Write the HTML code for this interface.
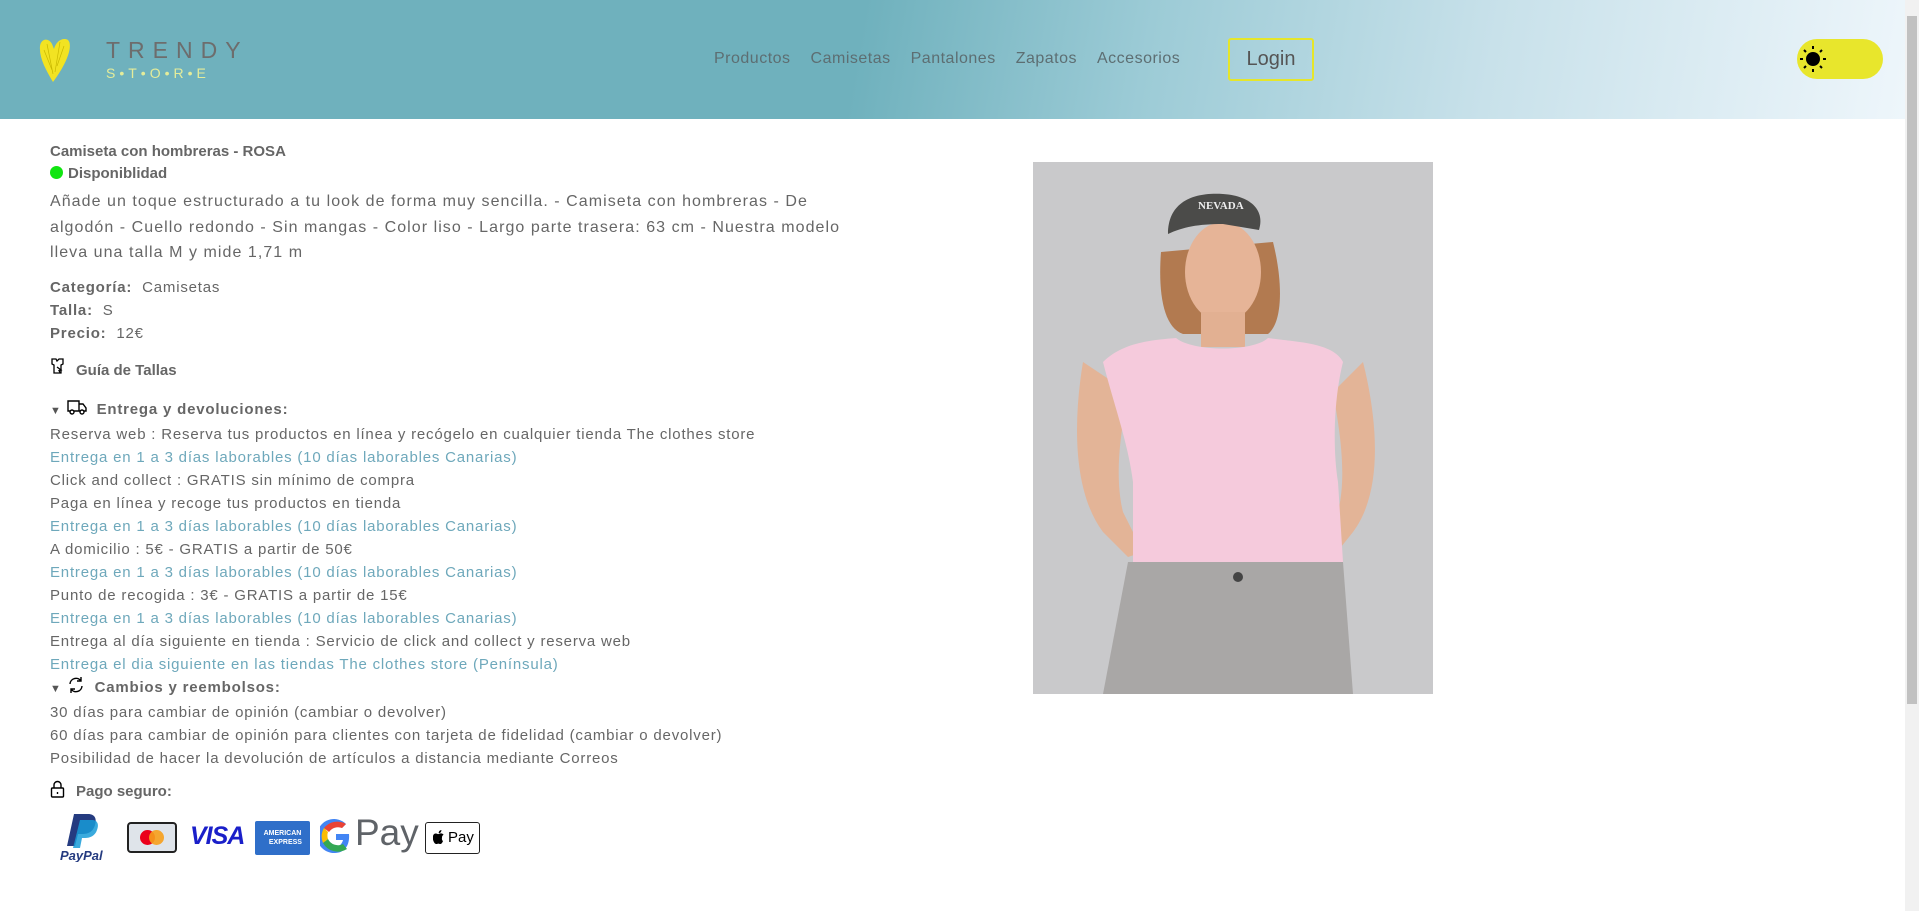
<!DOCTYPE html>
<html><head><meta charset="utf-8"><style>
*{margin:0;padding:0;box-sizing:border-box}
body{width:1919px;height:911px;overflow:hidden;background:#fff;font-family:"Liberation Sans",sans-serif;color:#666;position:relative}
.hdr{position:absolute;left:0;top:0;width:1905px;height:119px;background:linear-gradient(100deg,#6fb1bd 0%,#6fb1bd 45%,#9ccbd6 60%,#c8e1ea 78%,#eef6fb 100%)}
.sb{position:absolute;left:1905px;top:0;width:14px;height:911px;background:#f1f1f1}
.sb div{position:absolute;left:2px;top:16px;width:10px;height:688px;background:#c1c1c1}
.abs{position:absolute;white-space:nowrap}
.nav a{color:#5d6e72;font-size:16px;letter-spacing:.5px;margin-right:20px;text-decoration:none}
b{color:#666}
.lk{color:#6ea8bb}
.t{font-size:15px;letter-spacing:.8px}
</style></head><body>
<div class="hdr"></div>
<div class="sb"><div></div></div>
<svg class="abs" style="left:38px;top:36px" width="34" height="48" viewBox="0 0 34 48"><path d="M15 46 C8 34 1 22 2 10 C3 3 10 1 14 8 L16 13 C18 5 25 1 30 4 C35 9 30 26 15 46Z" fill="#f2e322"/><path d="M9 8 L15 38 M22 6 L17 36 M6 14 L14 34 M26 10 L19 30" stroke="#c9b800" stroke-width=".7" fill="none"/></svg>
<div class="abs" style="left:106px;top:37px;font-size:23px;letter-spacing:8px;color:#6d6d6d">TRENDY</div>
<div class="abs" style="left:106px;top:65px;font-size:14px;letter-spacing:4px;color:#e4ec9a">S•T•O•R•E</div>
<div class="abs nav" style="left:714px;top:50px">
<a>Productos</a><a>Camisetas</a><a>Pantalones</a><a>Zapatos</a><a>Accesorios</a></div>
<div class="abs" style="left:1228px;top:38px;width:86px;height:43px;border:2px solid #e6e62a;border-radius:3px;color:#555;font-size:20px;text-align:center;line-height:39px">Login</div>
<div class="abs" style="left:1797px;top:39px;width:86px;height:40px;border-radius:20px;background:#e8e62c"></div>
<svg class="abs" style="left:1799px;top:45px" width="28" height="28" viewBox="0 0 28 28"><circle cx="14" cy="14" r="7" fill="#000"/><g stroke="#000" stroke-width="2"><path d="M14 1v3M14 24v3M1 14h3M24 14h3M5 5l2 2M21 21l2 2M5 23l2-2M21 7l2-2"/></g></svg>

<div class="abs" style="left:50px;top:143px;font-size:15px;font-weight:bold;color:#666">Camiseta con hombreras - ROSA</div>
<div class="abs" style="left:50px;top:166px;width:13px;height:13px;border-radius:50%;background:#11e511"></div>
<div class="abs" style="left:68px;top:165px;font-size:15px;font-weight:bold;color:#666">Disponiblidad</div>
<div class="abs" style="left:50px;top:189px;font-size:16px;line-height:25.5px;letter-spacing:1.05px">Añade un toque estructurado a tu look de forma muy sencilla. - Camiseta con hombreras - De<br>algodón - Cuello redondo - Sin mangas - Color liso - Largo parte trasera: 63 cm - Nuestra modelo<br>lleva una talla M y mide 1,71 m</div>
<div class="abs t" style="left:50px;top:276px;line-height:23px"><b>Categoría:</b>&nbsp; Camisetas<br><b>Talla:</b>&nbsp; S<br><b>Precio:</b>&nbsp; 12€</div>
<svg class="abs" style="left:50px;top:357px" width="16" height="18" viewBox="0 0 16 18" fill="none" stroke="#000" stroke-width="1.3"><path d="M2 2h4l1 2 2-2h4v5l-2 1v8H4V8L2 7z"/><path d="M7 10l4 3-2 .5 1 2"/></svg>
<div class="abs" style="left:76px;top:362px;font-size:15px;font-weight:bold">Guía de Tallas</div>
<div class="abs t" style="left:50px;top:398px;line-height:23px">
<div><span style="font-size:11px;color:#555">▼</span> <svg width="20" height="16" viewBox="0 0 20 16" style="vertical-align:-1px" fill="none" stroke="#000" stroke-width="1.4"><path d="M1 2h11v10H1zM12 5h4l3 4v3h-7"/><circle cx="5" cy="13" r="2" fill="#fff"/><circle cx="15" cy="13" r="2" fill="#fff"/></svg>&nbsp; <b>Entrega y devoluciones:</b></div>
<div>Reserva web : Reserva tus productos en línea y recógelo en cualquier tienda The clothes store</div>
<div class="lk">Entrega en 1 a 3 días laborables (10 días laborables Canarias)</div>
<div>Click and collect : GRATIS sin mínimo de compra</div>
<div>Paga en línea y recoge tus productos en tienda</div>
<div class="lk">Entrega en 1 a 3 días laborables (10 días laborables Canarias)</div>
<div>A domicilio : 5€ - GRATIS a partir de 50€</div>
<div class="lk">Entrega en 1 a 3 días laborables (10 días laborables Canarias)</div>
<div>Punto de recogida : 3€ - GRATIS a partir de 15€</div>
<div class="lk">Entrega en 1 a 3 días laborables (10 días laborables Canarias)</div>
<div>Entrega al día siguiente en tienda : Servicio de click and collect y reserva web</div>
<div class="lk">Entrega el dia siguiente en las tiendas The clothes store (Península)</div>
<div><span style="font-size:11px;color:#555">▼</span> <svg width="18" height="18" viewBox="0 0 18 18" style="vertical-align:-2px" fill="none" stroke="#000" stroke-width="1.4"><path d="M3 8a6 6 0 0 1 11-3M15 10a6 6 0 0 1-11 3M14 1v4h-4M4 17v-4h4"/></svg>&nbsp; <b>Cambios y reembolsos:</b></div>
<div>30 días para cambiar de opinión (cambiar o devolver)</div>
<div>60 días para cambiar de opinión para clientes con tarjeta de fidelidad (cambiar o devolver)</div>
<div>Posibilidad de hacer la devolución de artículos a distancia mediante Correos</div>
</div>
<svg class="abs" style="left:50px;top:780px" width="15" height="18" viewBox="0 0 15 18" fill="none" stroke="#000" stroke-width="1.4"><path d="M4 8V5a3.5 3.5 0 0 1 7 0v3"/><rect x="1.5" y="8" width="12" height="9" rx="1"/><path d="M7.5 12v2"/></svg>
<div class="abs" style="left:76px;top:783px;font-size:15px;font-weight:bold">Pago seguro:</div>
<svg class="abs" style="left:58px;top:812px" width="60" height="50" viewBox="0 0 60 50"><path d="M16 2h14c7 0 9 5 7 11-2 7-7 9-13 9h-4l-3 12h-8z" fill="#253b80"/><path d="M22 8h12c6 0 7 5 5 10-2 6-7 8-12 8h-3l-2 10h-7z" fill="#179bd7" opacity=".85"/><text x="2" y="48" font-family="Liberation Sans" font-style="italic" font-weight="bold" font-size="13" fill="#253b80">PayPal</text></svg>
<div class="abs" style="left:127px;top:822px;width:50px;height:31px;border:2.5px solid #222;border-radius:4px;background:#dfe4ea"></div>
<div class="abs" style="left:140px;top:830px;width:15px;height:15px;border-radius:50%;background:#eb001b"></div>
<div class="abs" style="left:149px;top:830px;width:15px;height:15px;border-radius:50%;background:#f79e1b;opacity:.9"></div>
<div class="abs" style="left:190px;top:822px;font-size:25px;font-weight:bold;font-style:italic;color:#1a1fc9;letter-spacing:-1px">VISA</div>
<div class="abs" style="left:255px;top:821px;width:55px;height:34px;background:#2f6fc9;border-radius:2px;color:#fff;font-size:7px;line-height:9px;text-align:center;padding-top:8px;font-weight:bold">AMERICAN<br>&nbsp;&nbsp;&nbsp;EXPRESS</div>
<svg class="abs" style="left:320px;top:818px" width="32" height="36" viewBox="0 0 32 36"><path d="M29 16H16v6h7c-1 4-4 7-8 7a11 11 0 1 1 7-19l4-4A17 17 0 1 0 15 35c9 0 15-7 14-19z" fill="#4285f4"/><path d="M4 10l5 4a11 11 0 0 1 13-4l4-4A17 17 0 0 0 4 10z" fill="#ea4335"/><path d="M3 25l5-4a11 11 0 0 1 0-7L4 10a17 17 0 0 0-1 15z" fill="#fbbc05"/><path d="M3 25l5-4a11 11 0 0 0 15 5l4 5A17 17 0 0 1 3 25z" fill="#34a853"/></svg>
<div class="abs" style="left:355px;top:812px;font-size:37px;color:#5f6368">Pay</div>
<div class="abs" style="left:425px;top:822px;width:55px;height:32px;border:1.5px solid #222;border-radius:3px;font-size:15px;color:#000;line-height:29px;padding-left:22px">Pay</div>
<svg class="abs" style="left:433px;top:830px" width="12" height="14" viewBox="0 0 12 14"><path d="M9 7.5c0-2 1.5-2.6 1.6-2.7-.9-1.3-2.2-1.4-2.7-1.4-1.1-.1-2.2.7-2.8.7-.6 0-1.4-.7-2.4-.6C1.5 3.5.3 4.3 0 6c-.6 2.6.2 5.3 1.5 7 .6.8 1.3 1 1.9 1 .7 0 1-.4 2-.4s1.2.4 2 .4 1.3-.7 1.8-1.4c.6-.8.8-1.6.8-1.7 0 0-1.5-.6-1-3.4zM7.7 2.2C8.2 1.6 8.5.8 8.4 0 7.7 0 6.9.5 6.4 1c-.4.5-.8 1.3-.7 2.1.8.1 1.5-.4 2-.9z" fill="#000"/></svg>

<svg class="abs" style="left:1033px;top:162px" width="400" height="532" viewBox="0 0 400 532">
<rect width="400" height="532" fill="#c9c9cb"/>
<path d="M128 90 C125 130 130 165 150 172 L235 172 C250 160 250 120 240 80 Z" fill="#b27a50"/>
<ellipse cx="190" cy="110" rx="38" ry="50" fill="#e6b497"/>
<path d="M135 72 C135 40 160 30 190 32 C220 34 232 50 226 68 L190 62 C165 62 150 65 135 72Z" fill="#4b4b49"/>
<text x="165" y="47" font-family="Liberation Serif" font-weight="bold" font-size="11" fill="#eee">NEVADA</text>
<rect x="168" y="150" width="44" height="35" fill="#e2b092"/>
<path d="M50 200 C40 260 40 330 70 370 L95 395 L110 390 L90 350 C80 310 90 260 95 230Z" fill="#e3b497"/>
<path d="M330 200 C345 260 350 330 320 370 L300 395 L285 390 L305 350 C315 310 305 260 300 230Z" fill="#e3b497"/>
<path d="M70 200 C90 180 120 178 143 176 C160 190 220 190 235 176 C260 180 300 180 310 200 C300 240 300 290 305 320 L310 400 C250 410 150 410 100 400 L100 320 C95 280 80 240 70 200Z" fill="#f5cadc"/>
<path d="M95 400 L310 400 L320 532 L70 532Z" fill="#a9a7a6"/>
<circle cx="205" cy="415" r="5" fill="#444"/>
</svg>
</body></html>
